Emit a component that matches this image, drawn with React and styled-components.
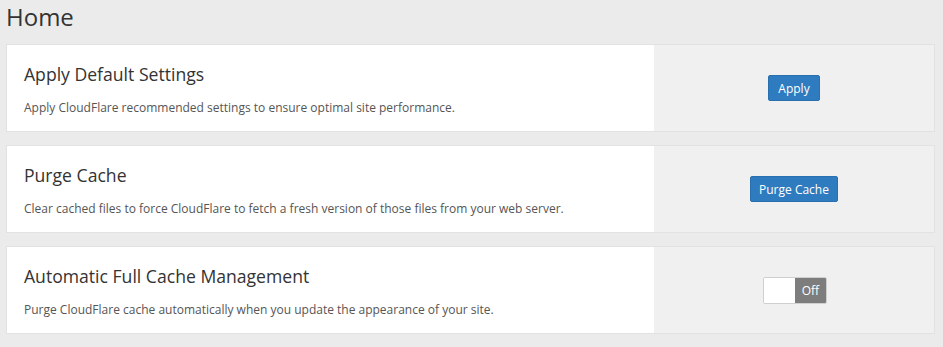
import React, { useState } from "react";
import styled, { createGlobalStyle } from "styled-components";

const GlobalStyle = createGlobalStyle`
  html, body {
    margin: 0;
    padding: 0;
    background: #ebebeb;
    font-family: "Open Sans", "Noto Sans", sans-serif;
    color: #333;
  }
`;

const Page = styled.div`
  padding: 0 8px 0 6px;
`;

const Title = styled.h1`
  margin: 0;
  padding-top: 1px;
  height: 43px;
  font-size: 24px;
  font-weight: 400;
  line-height: 32px;
  color: #333;
`;

const List = styled.div`
  display: flex;
  flex-direction: column;
  gap: 13px;
`;

const Card = styled.section`
  display: flex;
  height: 88px;
  background: #fff;
  border: 1px solid #e2e2e2;
  box-sizing: border-box;
`;

const Body = styled.div`
  flex: 1;
  padding: 17px 18px 0 17px;
`;

const CardTitle = styled.h2`
  margin: 0;
  font-size: 17.6px;
  font-weight: 400;
  line-height: 24px;
  color: #333;
`;

const Description = styled.p`
  margin: 13px 0 0;
  font-size: 12px;
  line-height: 18px;
  color: #555;
`;

const Side = styled.div`
  width: 280px;
  background: #f0f0f0;
  display: flex;
  align-items: center;
  justify-content: center;
`;

const Button = styled.button`
  height: 26px;
  padding: 0 ${(p) => p.$pad || 9}px;
  border: 1px solid #2a6fae;
  border-radius: 2px;
  background: #2f7bc0;
  color: #fff;
  font-family: inherit;
  font-size: 12px;
  cursor: pointer;
`;

const Toggle = styled.div`
  display: flex;
  width: 64px;
  height: 27px;
  margin-left: 2px;
  border: 1px solid #cfcfcf;
  border-radius: 2px;
  box-sizing: border-box;
  overflow: hidden;
  cursor: pointer;
`;

const Knob = styled.div`
  flex: 1;
  background: #fff;
`;

const State = styled.div`
  flex: 1;
  background: #7d7d7d;
  color: #fff;
  font-size: 12px;
  display: flex;
  align-items: center;
  justify-content: center;
`;

const items = [
  {
    title: "Apply Default Settings",
    text: "Apply CloudFlare recommended settings to ensure optimal site performance.",
    action: "apply",
  },
  {
    title: "Purge Cache",
    text: "Clear cached files to force CloudFlare to fetch a fresh version of those files from your web server.",
    action: "purge",
  },
  {
    title: "Automatic Full Cache Management",
    text: "Purge CloudFlare cache automatically when you update the appearance of your site.",
    action: "toggle",
  },
];

export default function App() {
  const [on, setOn] = useState(false);

  const renderAction = (action) => {
    if (action === "apply") return <Button $pad={9}>Apply</Button>;
    if (action === "purge") return <Button $pad={8}>Purge Cache</Button>;
    return (
      <Toggle onClick={() => setOn(!on)}>
        <Knob />
        <State>{on ? "On" : "Off"}</State>
      </Toggle>
    );
  };

  return (
    <Page>
      <GlobalStyle />
      <Title>Home</Title>
      <List>
        {items.map((item) => (
          <Card key={item.title}>
            <Body>
              <CardTitle>{item.title}</CardTitle>
              <Description>{item.text}</Description>
            </Body>
            <Side>{renderAction(item.action)}</Side>
          </Card>
        ))}
      </List>
    </Page>
  );
}
